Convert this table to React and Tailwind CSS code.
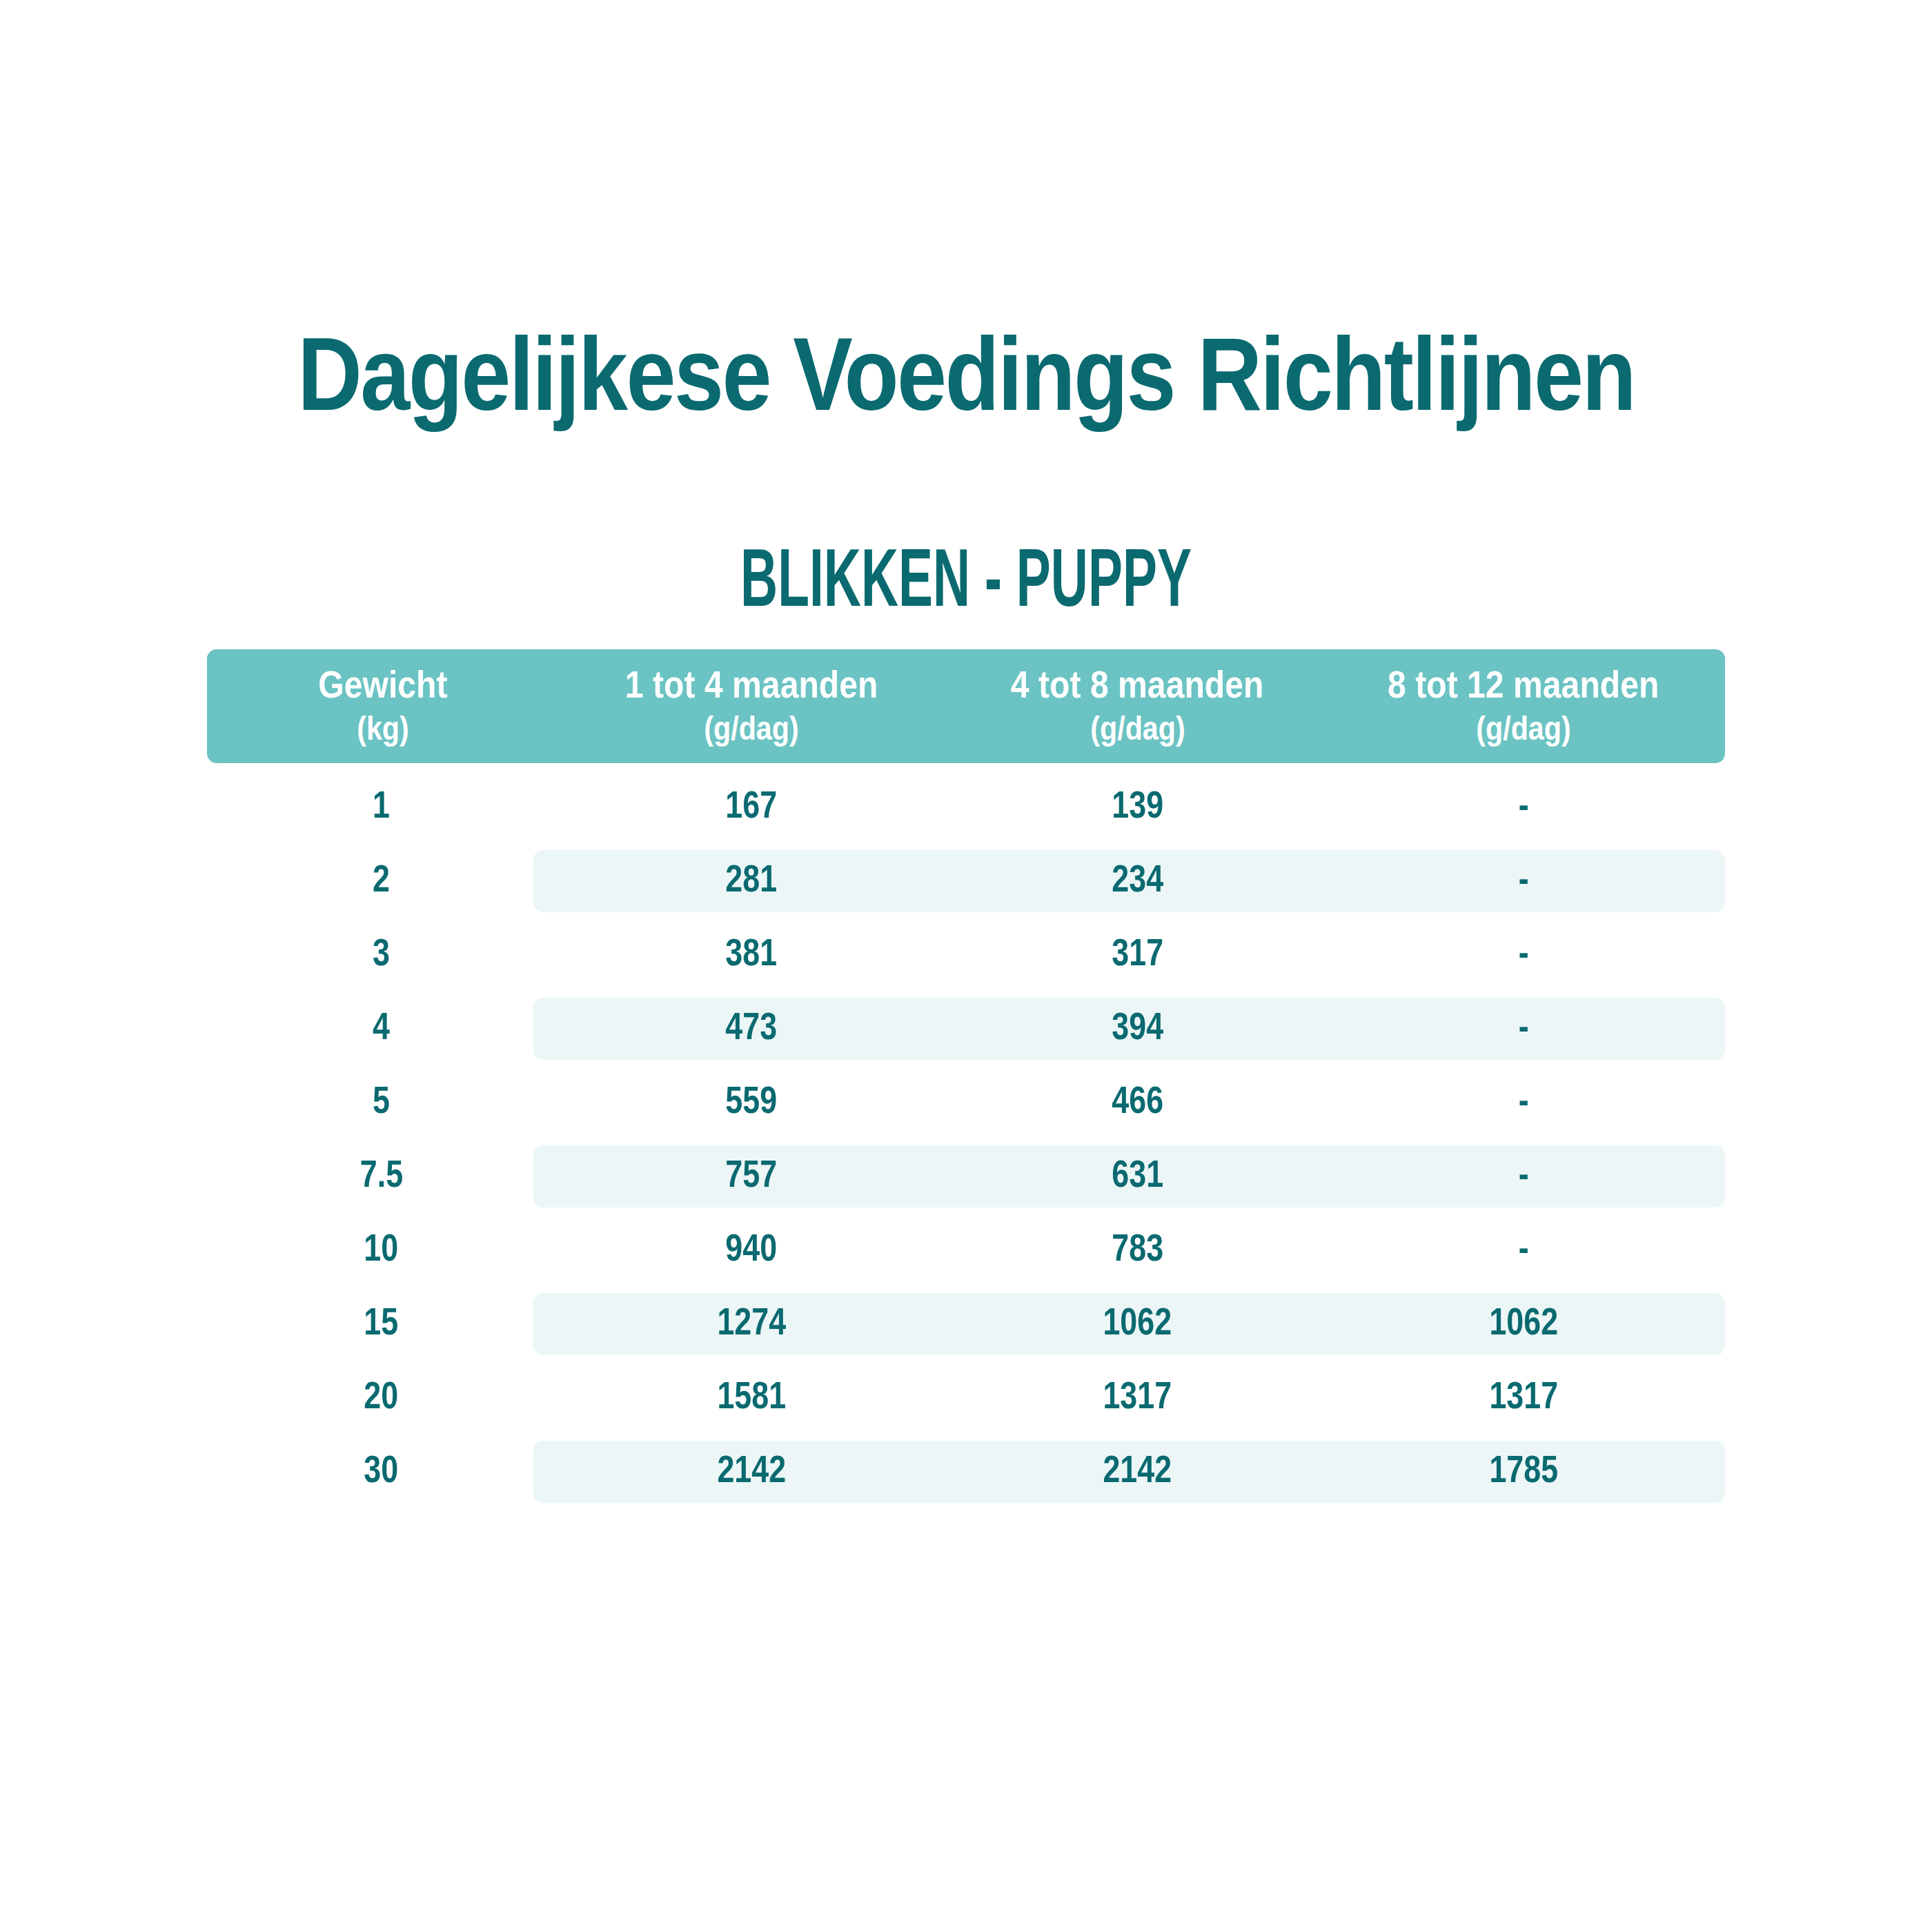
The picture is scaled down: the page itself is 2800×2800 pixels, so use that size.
const rows = [
  ['1', '167', '139', '-'],
  ['2', '281', '234', '-'],
  ['3', '381', '317', '-'],
  ['4', '473', '394', '-'],
  ['5', '559', '466', '-'],
  ['7.5', '757', '631', '-'],
  ['10', '940', '783', '-'],
  ['15', '1274', '1062', '1062'],
  ['20', '1581', '1317', '1317'],
  ['30', '2142', '2142', '1785'],
];

const headers = [
  ['Gewicht', '(kg)'],
  ['1 tot 4 maanden', '(g/dag)'],
  ['4 tot 8 maanden', '(g/dag)'],
  ['8 tot 12 maanden', '(g/dag)'],
];

const font = { fontFamily: '"Liberation Sans", Arial, sans-serif' };

function Cell({ children }) {
  return (
    <div className="flex justify-center">
      <span className="inline-block scale-x-[0.8] whitespace-nowrap">{children}</span>
    </div>
  );
}

export default function App() {
  return (
    <div className="w-[2800px] h-[2800px] bg-white text-[#0a6a70]" style={font}>
      <div className="pt-[452px] flex justify-center">
        <h1 className="text-[151px] leading-[180px] font-bold tracking-[-0.02em] whitespace-nowrap scale-x-[0.858]">
          Dagelijkese Voedings Richtlijnen
        </h1>
      </div>
      <div className="mt-[135px] flex justify-center">
        <h2 className="text-[119px] leading-[140px] font-bold whitespace-nowrap scale-x-[0.63]">
          BLIKKEN - PUPPY
        </h2>
      </div>

      <div className="mx-[300px] mt-[34px]">
        <div className="grid grid-cols-[509px_1fr_1fr_1fr] pr-[12px] h-[165px] bg-[#6bc3c3] rounded-[14px] text-white items-center">
          {headers.map(([a, b]) => (
            <div key={a} className="flex flex-col items-center">
              <span className="inline-block text-[56px] leading-[64px] font-bold scale-x-[0.86] whitespace-nowrap">{a}</span>
              <span className="inline-block text-[48px] leading-[64px] font-bold scale-x-[0.86] whitespace-nowrap">{b}</span>
            </div>
          ))}
        </div>

        <div className="mt-[6px]">
          {rows.map((r, i) => (
            <div key={r[0]} className="grid grid-cols-[473px_1fr] h-[107px] items-center text-[56px] font-bold">
              <div className="pl-[32px]">
                <Cell>{r[0]}</Cell>
              </div>
              <div className={`grid grid-cols-3 h-[90px] mt-[8px] items-center rounded-[14px] pl-[36px] pr-[12px] ${i % 2 === 1 ? 'bg-[#ecf6f7]' : ''}`}>
                <div className="-mt-[8px]"><Cell>{r[1]}</Cell></div>
                <div className="-mt-[8px]"><Cell>{r[2]}</Cell></div>
                <div className="-mt-[8px]"><Cell>{r[3]}</Cell></div>
              </div>
            </div>
          ))}
        </div>
      </div>
    </div>
  );
}
